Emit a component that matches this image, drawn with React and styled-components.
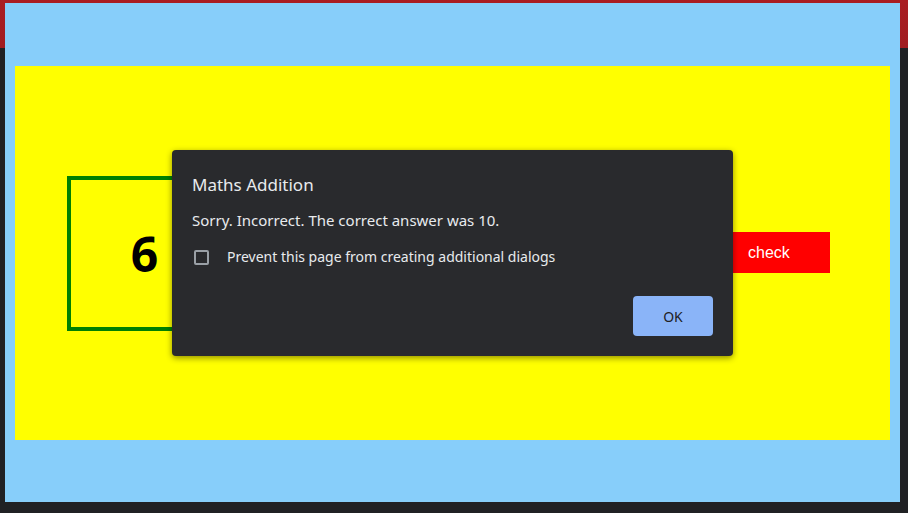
import React from 'react';
import styled, { createGlobalStyle } from 'styled-components';

const GlobalStyle = createGlobalStyle`
    html, body {
        margin: 0;
        padding: 0;
        background: #202124;
        overflow: hidden;
    }
`

export default function App(){
    return (
        <>
            <GlobalStyle />
            <Desktop>
                <Window>
                    <Playground>
                        <SumBox>6</SumBox>
                        <CheckButton>check</CheckButton>
                    </Playground>
                </Window>
                <Dialog>
                    <DialogTitle>Maths Addition</DialogTitle>
                    <DialogMessage>Sorry. Incorrect. The correct answer was 10.</DialogMessage>
                    <CheckRow>
                        <Tick />
                        <span>Prevent this page from creating additional dialogs</span>
                    </CheckRow>
                    <DialogFooter>
                        <OkButton>OK</OkButton>
                    </DialogFooter>
                </Dialog>
            </Desktop>
        </>
    )
}

const Desktop = styled.div`
    position: relative;
    width: 908px;
    height: 513px;
    padding: 3px 8px 0 5px;
    box-sizing: border-box;
    background: linear-gradient(to bottom, #a91d22 0, #a11c20 48px, #202124 48px);
`

const Window = styled.div`
    width: 895px;
    height: 499px;
    box-sizing: border-box;
    padding: 63px 10px 0 10px;
    background: #87cefa;
`

const Playground = styled.div`
    height: 374px;
    background: #ffff00;
    display: flex;
    align-items: center;
    justify-content: space-between;
    padding: 0 60px 0 52px;
`

const SumBox = styled.div`
    width: 147px;
    height: 147px;
    border: 4px solid #008000;
    display: flex;
    align-items: center;
    justify-content: center;
    font-family: "Open Sans", "Noto Sans", sans-serif;
    font-weight: 700;
    font-size: 48px;
    color: #000;
`

const CheckButton = styled.button`
    width: 110px;
    height: 41px;
    margin-top: -1px;
    border: none;
    background: #ff0000;
    color: #fff;
    font-family: "Liberation Sans", Arial, sans-serif;
    font-size: 16px;
    text-align: left;
    padding: 0 0 0 28px;
`

const Dialog = styled.div`
    position: absolute;
    left: 172px;
    top: 150px;
    width: 561px;
    height: 206px;
    box-sizing: border-box;
    padding: 24px 20px 20px 20px;
    background: #292a2d;
    border-radius: 4px;
    box-shadow: 0 2px 6px rgba(0, 0, 0, 0.45);
    font-family: "Noto Sans", "Open Sans", sans-serif;
    color: #e8eaed;
    display: flex;
    flex-direction: column;
`

const DialogTitle = styled.div`
    font-size: 17px;
    line-height: 22px;
`

const DialogMessage = styled.div`
    margin-top: 14px;
    font-size: 15px;
    line-height: 20px;
`

const CheckRow = styled.label`
    margin-top: 17px;
    display: flex;
    align-items: center;
    gap: 18px;
    font-size: 14px;
    line-height: 20px;
    padding-left: 2px;
`

const Tick = styled.span`
    width: 11px;
    height: 11px;
    border: 2px solid #9aa0a6;
    border-radius: 2px;
`

const DialogFooter = styled.div`
    margin-top: auto;
    display: flex;
    justify-content: flex-end;
`

const OkButton = styled.button`
    width: 80px;
    height: 40px;
    border: none;
    border-radius: 4px;
    background: #8ab4f8;
    color: #202124;
    font-family: "Noto Sans", "Open Sans", sans-serif;
    font-size: 14px;
`
